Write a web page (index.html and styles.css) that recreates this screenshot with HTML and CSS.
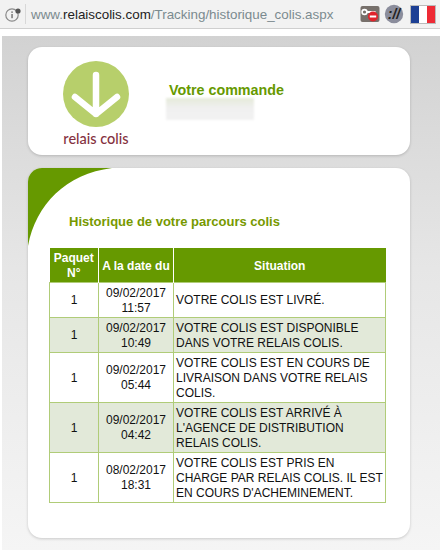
FILE: index.html
```html
<!DOCTYPE html>
<html lang="fr">
<head>
  <meta charset="UTF-8" />
  <title>Relais Colis - Historique</title>
  <link rel="stylesheet" href="styles.css">
</head>
<body>
  <div class="toolbar">
    <svg class="info" width="18" height="18" viewBox="0 0 18 18">
      <circle cx="9" cy="10" r="6.2" fill="none" stroke="#8a8a8a" stroke-width="1.2"/>
      <rect x="8.3" y="9" width="1.5" height="4.2" fill="#777"/>
      <rect x="8.3" y="6.4" width="1.5" height="1.5" fill="#777"/>
      <circle cx="15" cy="6" r="2.6" fill="#555"/>
    </svg>
    <span class="sep"></span>
    <div class="url"><span class="host-dim">www.</span><span class="host">relaiscolis.com</span>/Tracking/historique_colis.aspx</div>
    <div class="addons">
      <svg width="20" height="18" viewBox="0 0 20 18">
        <rect x="0.5" y="1" width="19" height="16" rx="2" fill="#77706b"/>
        <circle cx="4.5" cy="7" r="2.4" fill="none" stroke="#fff" stroke-width="1.6"/>
        <rect x="6.5" y="6" width="9" height="2" fill="#fff"/>
        <circle cx="13" cy="11.5" r="5" fill="#e0232b"/>
        <rect x="9.8" y="10.5" width="6.4" height="2" fill="#fff"/>
      </svg>
      <svg width="20" height="20" viewBox="0 0 20 20">
        <circle cx="10" cy="10" r="9.2" fill="#8b8d9c"/>
        <text x="10" y="15" class="glyph" text-anchor="middle">://</text>
      </svg>
      <div class="flag"><span class="fr-b"></span><span class="fr-w"></span><span class="fr-r"></span></div>
    </div>
  </div>

  <div class="page">
    <div class="card head-card">
      <div class="logo">
        <svg width="66" height="66" viewBox="0 0 66 66">
          <circle cx="33" cy="33" r="33" fill="#b7cf6b"/>
          <path d="M33 14 V53 M12 36 L33 53 L54 36" fill="none" stroke="#fff" stroke-width="6.5" stroke-linecap="round" stroke-linejoin="round"/>
        </svg>
        <div class="logo-name">relais colis</div>
      </div>
      <div class="order">
        <div class="order-title">Votre commande</div>
        <div class="order-blur"></div>
      </div>
    </div>

    <div class="card track-card">
      <svg class="corner" width="84" height="78" viewBox="0 0 84 78">
        <path d="M0 78 V0 H84 C38 6 8 36 0 78 Z" fill="#669900"/>
      </svg>
      <h2 class="track-title">Historique de votre parcours colis</h2>
      <table class="track">
        <thead>
          <tr><th class="col-num">Paquet N°</th><th class="col-date">A la date du</th><th>Situation</th></tr>
        </thead>
        <tbody>
          <tr class="r35"><td class="c">1</td><td class="c">09/02/2017<br>11:57</td><td>VOTRE COLIS EST LIVRÉ.</td></tr>
          <tr class="r35 alt"><td class="c">1</td><td class="c">09/02/2017<br>10:49</td><td>VOTRE COLIS EST DISPONIBLE DANS VOTRE RELAIS COLIS.</td></tr>
          <tr class="r50"><td class="c">1</td><td class="c">09/02/2017<br>05:44</td><td>VOTRE COLIS EST EN COURS DE LIVRAISON DANS VOTRE RELAIS COLIS.</td></tr>
          <tr class="r50 alt"><td class="c">1</td><td class="c">09/02/2017<br>04:42</td><td>VOTRE COLIS EST ARRIVÉ À L'AGENCE DE DISTRIBUTION RELAIS COLIS.</td></tr>
          <tr class="r50"><td class="c">1</td><td class="c">08/02/2017<br>18:31</td><td>VOTRE COLIS EST PRIS EN CHARGE PAR RELAIS COLIS. IL EST EN COURS D'ACHEMINEMENT.</td></tr>
        </tbody>
      </table>
    </div>
  </div>
</body>
</html>
```

FILE: styles.css
```css
html, body {
  margin: 0;
  padding: 0;
}

body {
  width: 440px;
  height: 550px;
  overflow: hidden;
  background: #fff;
  font-family: "Liberation Sans", Arial, sans-serif;
}

.toolbar {
  height: 28px;
  background: #f2f2f2;
  border-bottom: 1px solid #cfcfcf;
  display: flex;
  align-items: center;
  padding-left: 3px;
  padding-right: 4px;
}

.info {
  flex: none;
}

.sep {
  width: 1px;
  height: 20px;
  background: #d8d8d8;
  margin: 0 5px 0 4px;
}

.url {
  flex: 1;
  font-size: 13.4px;
  color: #7b8a8f;
  white-space: nowrap;
}

.host-dim {
  color: #7b8a8f;
}

.host {
  color: #222;
}

.addons {
  display: flex;
  align-items: center;
  gap: 4px;
}

.glyph {
  font-size: 14px;
  font-weight: bold;
  font-style: italic;
  fill: #222;
}

.flag {
  display: flex;
  width: 24px;
  height: 17px;
  margin-left: 2px;
  border: 1px solid #bbb;
}

.flag span {
  flex: 1;
}

.fr-b { background: #1c3f94; }
.fr-w { background: #fff; }
.fr-r { background: #ee2a35; }

.page {
  margin-top: 7px;
  margin-left: 2px;
  height: 514px;
  background: linear-gradient(to bottom, #d2d2d2, #e6e6e6 45%, #f5f5f5);
  padding: 11px 30px 0 26px;
  box-sizing: border-box;
}

.card {
  background: #fff;
  border-radius: 14px;
  box-shadow: 0 1px 3px rgba(0, 0, 0, 0.18);
}

.head-card {
  height: 108px;
  display: flex;
  align-items: flex-start;
}

.logo {
  margin: 14px 0 0 35px;
  width: 66px;
}

.logo svg {
  display: block;
}

.logo-name {
  font-family: Lato, "Noto Sans", sans-serif;
  font-size: 14.5px;
  font-weight: 500;
  color: #85323f;
  text-align: center;
  white-space: nowrap;
  margin-top: 3px;
}

.order {
  margin: 35px 0 0 40px;
}

.order-title {
  font-size: 14.3px;
  font-weight: bold;
  color: #669900;
  line-height: 16px;
}

.order-blur {
  width: 88px;
  height: 22px;
  background: linear-gradient(to bottom, #e6ebda, #f0f0f0 45%, #f2f2f2);
  filter: blur(1px);
  margin-left: -3px;
}

.track-card {
  position: relative;
  height: 370px;
  margin-top: 13px;
  padding: 46px 24px 0 22px;
  box-sizing: border-box;
  overflow: hidden;
}

.corner {
  position: absolute;
  left: 0;
  top: 0;
}

.track-title {
  margin: 0 0 18px 19px;
  font-size: 13px;
  line-height: 16px;
  font-weight: bold;
  color: #779900;
}

.track {
  width: 337px;
  margin-left: -1px;
  table-layout: fixed;
  border-collapse: collapse;
  font-size: 12px;
  color: #111;
}

.track th {
  background: #669900;
  color: #fff;
  font-weight: bold;
  height: 34px;
  padding: 3px 2px 0;
  line-height: 15px;
  border-left: 1px solid #fff;
  box-sizing: border-box;
}

.track th:first-child {
  border-left: 0;
}

.col-num {
  width: 49px;
}

.col-date {
  width: 75px;
}

.track td {
  border: 1px solid #b0cc78;
  padding: 2px 2px 0;
  line-height: 15px;
}

.track .c {
  text-align: center;
}

.r35 td {
  height: 32px;
}

.r50 td {
  height: 47px;
}

.alt td {
  background: #e2e9d9;
}
```
